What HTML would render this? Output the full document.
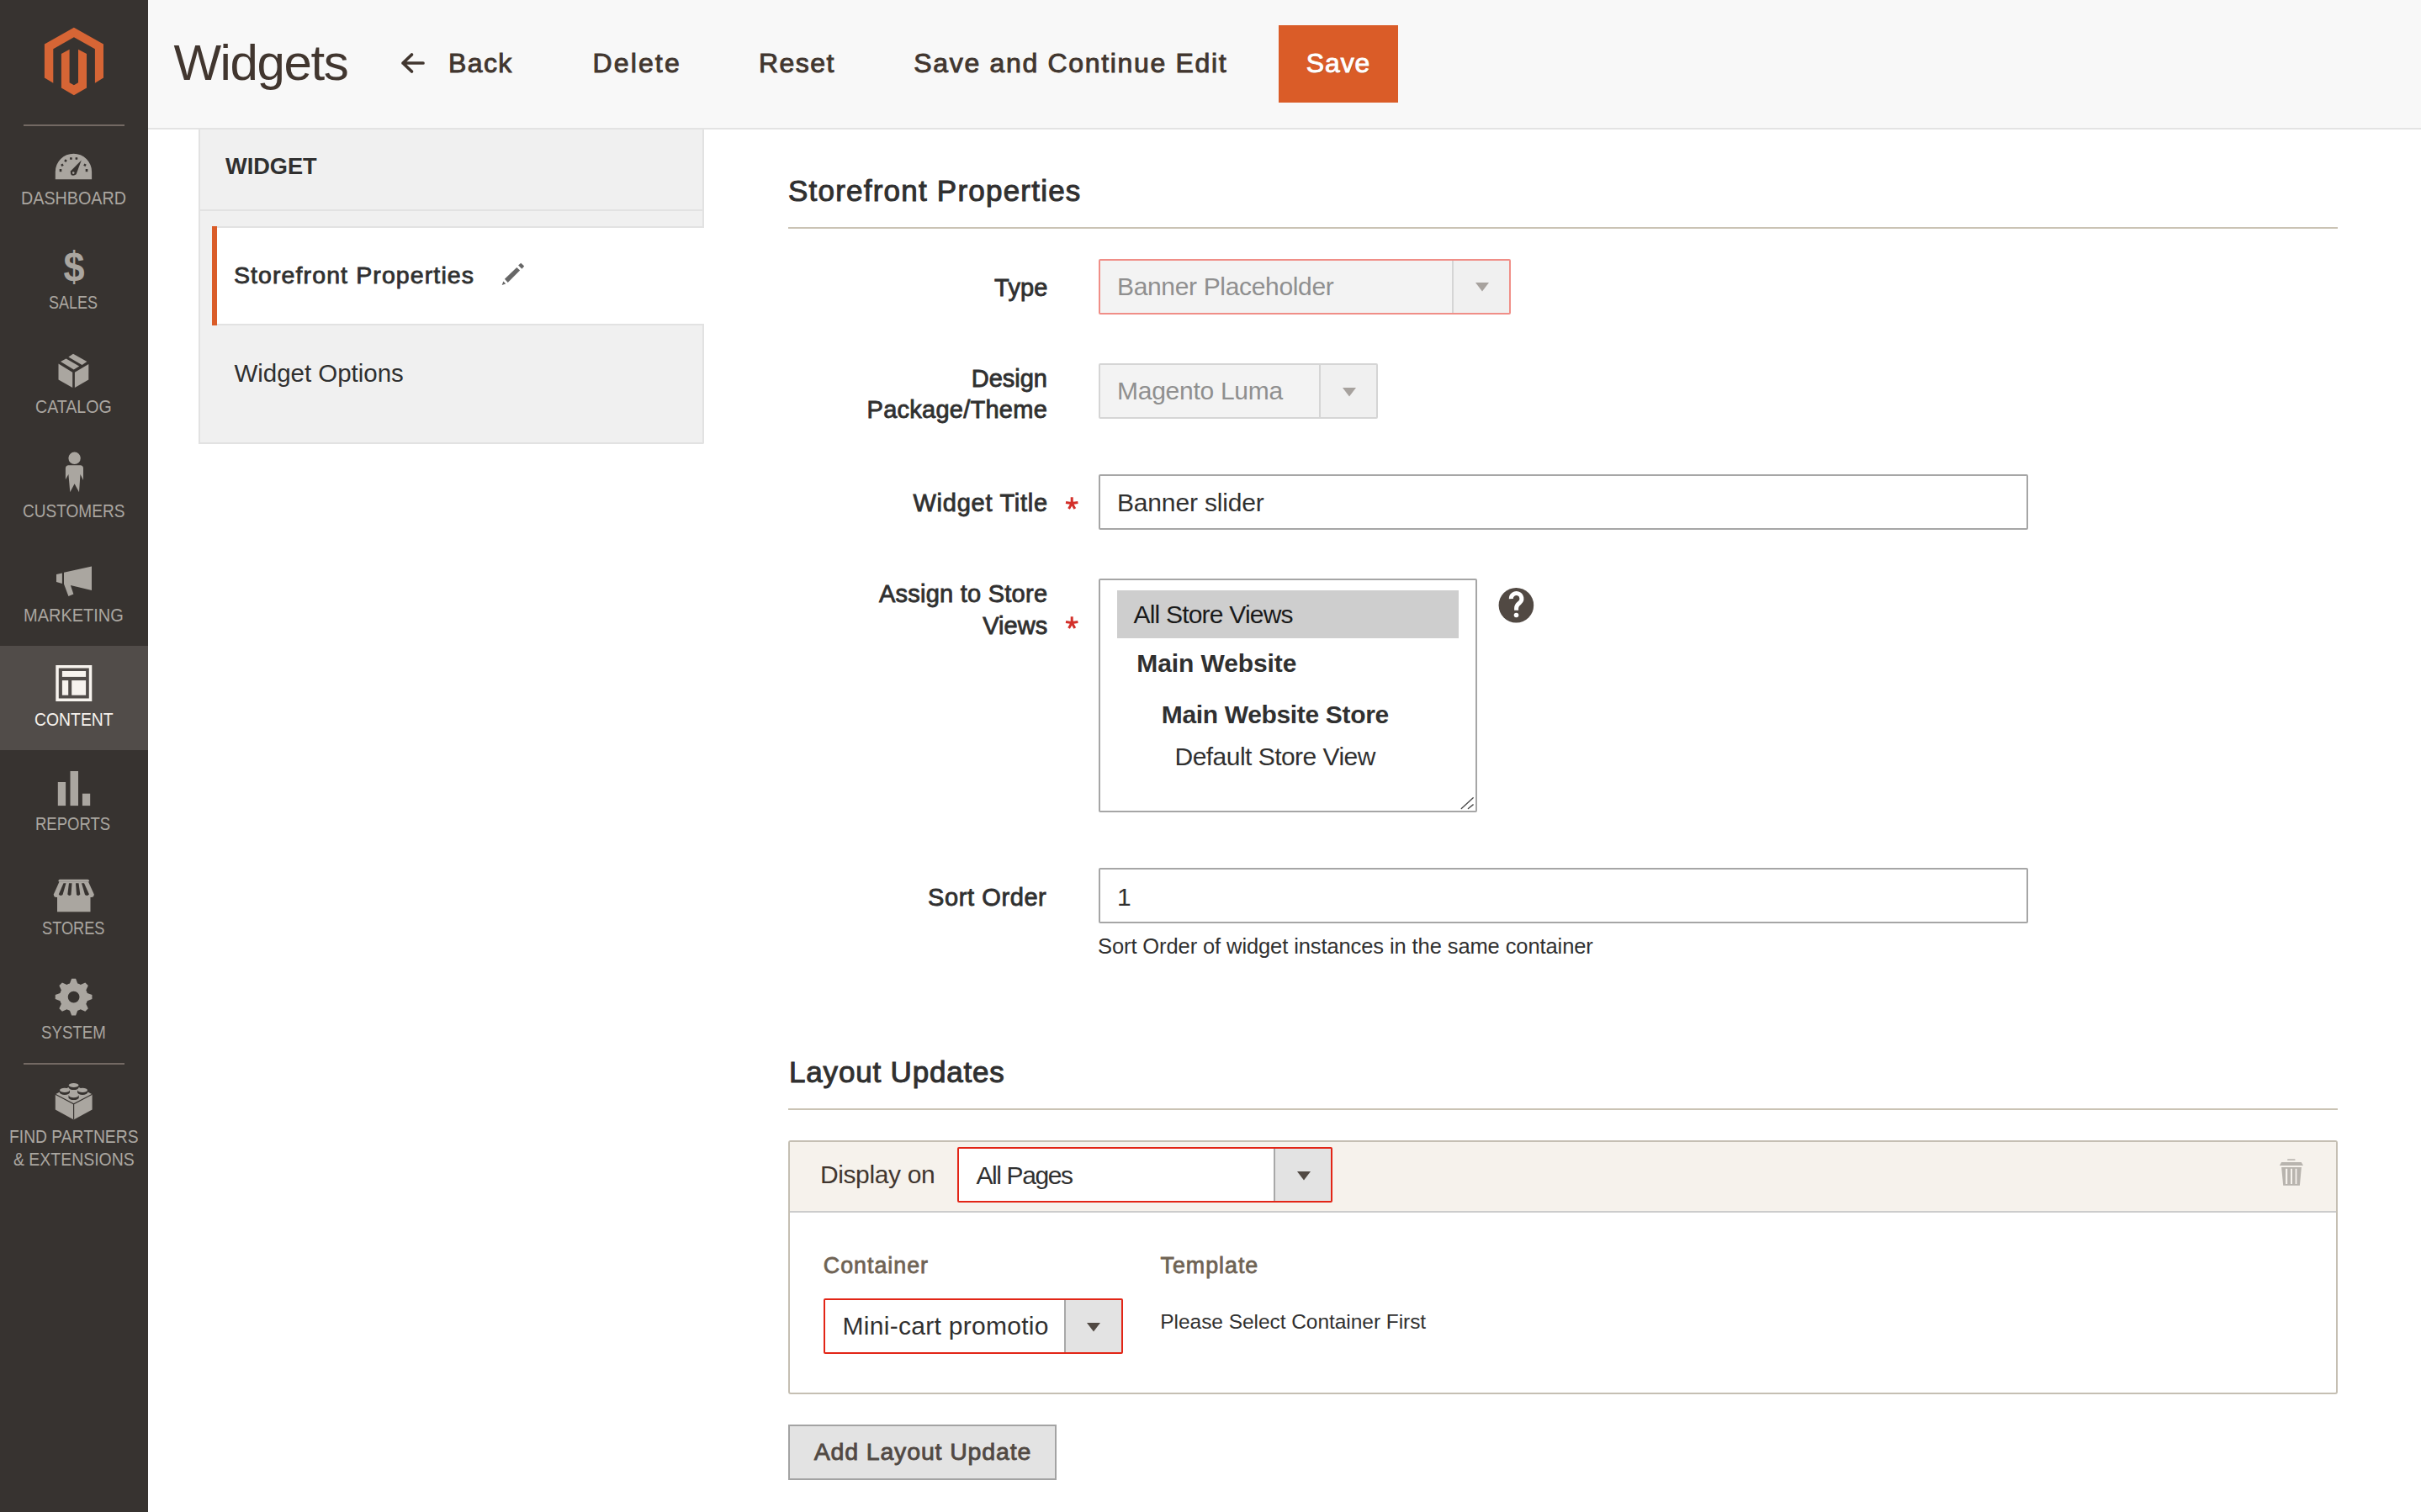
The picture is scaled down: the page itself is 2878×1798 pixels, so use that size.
<!DOCTYPE html>
<html><head><meta charset="utf-8"><title>Widgets</title>
<style>
html,body{margin:0;padding:0;}
body{width:2878px;height:1798px;overflow:hidden;position:relative;background:#fff;font-family:"Liberation Sans", sans-serif;}
.t{position:absolute;line-height:1;white-space:nowrap;}
svg{position:absolute;overflow:visible;}
</style></head><body>

<div style="position:absolute;left:0px;top:0px;width:176px;height:1798px;background:#373330"></div>
<svg style="left:0px;top:0px" width="176" height="130" viewBox="0 0 176 130"><path fill="#d66535" d="M87.9,32.7 L123,52.6 L123,92.6 L112.9,98.7 L112.9,58.3 L87.9,44.3 L63.3,58.3 L63.3,98.7 L52.9,92.6 L52.9,52.6 Z"/><path fill="#d66535" d="M72.9,64.1 L82.6,58.7 L82.6,98.3 L87.9,101.2 L93,98.3 L93,58.7 L103,64.1 L103,104.5 L87.9,113.2 L72.9,104.5 Z"/></svg>
<div style="position:absolute;left:28px;top:148px;width:120px;height:2px;background:#736963"></div>
<div style="position:absolute;left:28px;top:1264px;width:120px;height:2px;background:#736963"></div>
<div style="position:absolute;left:0px;top:768px;width:176px;height:124px;background:#514c49"></div>
<svg style="left:0px;top:170px" width="176" height="50" viewBox="0 170 176 50"><path fill="#aaa6a0" d="M65.8,213.3 L65.8,204.3 A21.65,21.65 0 0 1 109.1,204.3 L109.1,213.3 Z"/><g fill="#373330"><rect x="70.7" y="201" width="2.6" height="3.2"/><rect x="72.6" y="195" width="2.6" height="2.6" transform="rotate(-30 73.9 196.2)"/><rect x="76.7" y="189.8" width="2.6" height="2.6" transform="rotate(-55 78 191.1)"/><rect x="83" y="187.3" width="2.6" height="2.6" transform="rotate(-80 84.3 188.5)"/><rect x="89.5" y="187.3" width="2.6" height="2.6" transform="rotate(-100 90.8 188.5)"/><rect x="99.7" y="195" width="2.6" height="2.6" transform="rotate(30 101 196.2)"/><rect x="101.7" y="201" width="2.6" height="3.2"/><path d="M96.8,190.5 L90.6,207.3 Q88,209.5 84.8,208.3 Q83.4,205.5 83.9,203.5 Z"/></g><circle cx="87.2" cy="205.6" r="1.3" fill="#aaa6a0"/></svg>
<div class="t" style="left:0;width:176px;text-align:center;top:292px;font-size:50px;font-weight:700;color:#aaa6a0;transform:scaleX(0.9);transform-origin:87.4px 0">$</div>
<svg style="left:0px;top:410px" width="176" height="60" viewBox="0 410 176 60"><g fill="#aaa6a0"><path d="M69.5,432.6 L86.2,442.7 L86.2,461 L69.5,451.5 Z"/><path d="M88.9,442.7 L105.3,433 L105.3,451.5 L88.9,461 Z"/><path d="M72,430.1 L78.6,426.4 L94.2,435.5 L87.7,439.5 Z"/><path d="M81.4,424.5 L87,420.7 L103.4,430.1 L97.5,433.9 Z"/></g></svg>
<svg style="left:0px;top:530px" width="176" height="60" viewBox="0 530 176 60"><g fill="#aaa6a0"><circle cx="88.6" cy="544.8" r="7.2"/><path d="M81,553.3 L96,553.3 Q99,553.8 99,557 L99,570.9 L95.5,564 L94,585.3 L88.6,575.3 L83.3,585.3 L81.4,564 L77.9,570.2 L77.9,557 Q78,553.8 81,553.3 Z"/></g></svg>
<svg style="left:0px;top:665px" width="176" height="50" viewBox="0 665 176 50"><g fill="#aaa6a0"><path d="M67,683 L73.9,681.4 L73.9,694 L67,692 Z"/><path d="M76,680.8 L109,673.6 L109,702 L83.9,695.9 L87.4,706.5 L81.4,709 L76,694.6 Z"/></g></svg>
<svg style="left:0px;top:785px" width="176" height="55" viewBox="0 785 176 55"><g fill="#f7f3ee"><path fill-rule="evenodd" d="M66.3,791 L109.3,791 L109.3,834 L66.3,834 Z M69.8,794.5 L69.8,830.5 L105.8,830.5 L105.8,794.5 Z"/><rect x="73.9" y="798" width="28.2" height="6.9"/><rect x="73.9" y="809.1" width="7.3" height="17.6"/><rect x="85.2" y="809.1" width="16.9" height="17.6"/></g></svg>
<svg style="left:0px;top:910px" width="176" height="55" viewBox="0 910 176 55"><g fill="#aaa6a0"><rect x="68.8" y="930" width="9.3" height="28.1"/><rect x="83.5" y="917" width="9.5" height="41.1"/><rect x="97.9" y="943.7" width="9.3" height="14.4"/></g></svg>
<svg style="left:0px;top:1040px" width="176" height="50" viewBox="0 1040 176 50"><g fill="#aaa6a0"><rect x="69.5" y="1045.8" width="36.4" height="3" rx="1.5"/><path d="M70.5,1048.5 L105,1048.5 L111.8,1063.5 Q111.8,1067 108.5,1067 L67,1067 Q63.8,1067 63.8,1063.5 Z"/><rect x="68" y="1066" width="39.5" height="18.3"/></g><g fill="#373330"><path d="M75.5,1050.3 L78.5,1050.3 L74.5,1064 Q71.5,1066 69.8,1063.5 Z"/><path d="M82,1050.3 L85.5,1050.3 L84.5,1064 Q82,1066 80.3,1063.5 Z"/><path d="M90,1050.3 L93.5,1050.3 L95.3,1063.5 Q93.5,1066 91,1064 Z"/><path d="M97,1050.3 L100,1050.3 L106,1063.5 Q104,1066 101,1064 Z"/></g></svg>
<svg style="left:0px;top:1155px" width="176" height="60" viewBox="0 1155 176 60"><path fill="#aaa6a0" fill-rule="evenodd" d="M82.97,1169.45 L85.11,1163.74 L90.09,1163.74 L92.23,1169.45 L93.07,1169.72 L94.03,1170.08 L94.96,1170.50 L95.74,1170.91 L101.30,1168.38 L104.82,1171.90 L102.29,1177.46 L102.70,1178.24 L103.12,1179.17 L103.48,1180.13 L103.75,1180.97 L109.46,1183.11 L109.46,1188.09 L103.75,1190.23 L103.48,1191.07 L103.12,1192.03 L102.70,1192.96 L102.29,1193.74 L104.82,1199.30 L101.30,1202.82 L95.74,1200.29 L94.96,1200.70 L94.03,1201.12 L93.07,1201.48 L92.23,1201.75 L90.09,1207.46 L85.11,1207.46 L82.97,1201.75 L82.13,1201.48 L81.17,1201.12 L80.24,1200.70 L79.46,1200.29 L73.90,1202.82 L70.38,1199.30 L72.91,1193.74 L72.50,1192.96 L72.08,1192.03 L71.72,1191.07 L71.45,1190.23 L65.74,1188.09 L65.74,1183.11 L71.45,1180.97 L71.72,1180.13 L72.08,1179.17 L72.50,1178.24 L72.91,1177.46 L70.38,1171.90 L73.90,1168.38 L79.46,1170.91 L80.24,1170.50 L81.17,1170.08 L82.13,1169.72 Z M94.5,1185.6 A6.9,6.9 0 1 0 80.69999999999999,1185.6 A6.9,6.9 0 1 0 94.5,1185.6 Z"/></svg>
<svg style="left:0px;top:1280px" width="176" height="60" viewBox="0 1280 176 60"><path fill="#aaa6a0" d="M65.8,1301.2 L87.6,1289.8 L109.6,1301.2 L109.6,1319.4 L87.6,1331.5 L65.8,1319.4 Z"/><path fill="none" stroke="#373330" stroke-width="1.2" d="M65.8,1301.2 L87.6,1312.8 L109.6,1301.2 M87.6,1312.8 L87.6,1331.5"/><path fill="#373330" d="M81.5,1290.5 L93.7,1290.5 L93.7,1293.1 A6.1,2.9 0 0 1 81.5,1293.1 Z"/><ellipse cx="87.6" cy="1290.5" rx="5.8" ry="2.6" fill="#aaa6a0"/><path fill="#373330" d="M70.8,1296.4 L83.0,1296.4 L83.0,1299.0 A6.1,2.9 0 0 1 70.8,1299.0 Z"/><ellipse cx="76.9" cy="1296.4" rx="5.8" ry="2.6" fill="#aaa6a0"/><path fill="#373330" d="M92.0,1296.4 L104.2,1296.4 L104.2,1299.0 A6.1,2.9 0 0 1 92.0,1299.0 Z"/><ellipse cx="98.1" cy="1296.4" rx="5.8" ry="2.6" fill="#aaa6a0"/><path fill="#373330" d="M81.5,1302.6 L93.7,1302.6 L93.7,1305.2 A6.1,2.9 0 0 1 81.5,1305.2 Z"/><ellipse cx="87.6" cy="1302.6" rx="5.8" ry="2.6" fill="#aaa6a0"/></svg>
<div style="position:absolute;left:176px;top:0px;width:2702px;height:152px;background:#f8f8f8"></div>
<div style="position:absolute;left:176px;top:152px;width:2702px;height:2px;background:#e3e3e3"></div>
<svg style="left:470px;top:55px" width="45" height="40" viewBox="470 55 45 40"><path d="M503,75 L479,75 M489.5,65 L479,75 L489.5,85" fill="none" stroke="#41362f" stroke-width="3.7" stroke-linecap="round" stroke-linejoin="round"/></svg>
<div style="position:absolute;left:1520px;top:30px;width:142px;height:92px;background:#da5c28"></div>
<div style="position:absolute;left:236px;top:154px;width:601px;height:374px;background:#f0f0f0;box-sizing:border-box;border:2px solid #e2e2e2;border-top:none;border-bottom-right-radius:2px"></div>
<div style="position:absolute;left:238px;top:249px;width:597px;height:2px;background:#e2e2e2"></div>
<div style="position:absolute;left:258px;top:269px;width:579px;height:2px;background:#e2e2e2"></div>
<div style="position:absolute;left:258px;top:271px;width:600px;height:114px;background:#fff"></div>
<div style="position:absolute;left:252px;top:269px;width:6px;height:118px;background:#da5c28"></div>
<div style="position:absolute;left:258px;top:385px;width:579px;height:2px;background:#e2e2e2"></div>
<svg style="left:590px;top:308px" width="40" height="36" viewBox="590 308 40 36"><g fill="#676767"><path d="M596.7,338.9 L598.4,334.6 L601.2,337.5 Z"/><path d="M599.9,331.7 L614.3,317.9 L618.1,321.5 L603.7,335.9 Z"/><path d="M616.1,315.4 L619.2,312.7 L623.2,316.5 L620.4,319.8 Z"/></g></svg>
<div style="position:absolute;left:937px;top:270px;width:1842px;height:2px;background:#cac3b4"></div>
<svg style="left:1266px;top:591px" width="16" height="16" viewBox="0 0 16 16"><g stroke="#d3302a" stroke-width="3"><path d="M8.2,0.3 L8.2,7.6 M1,6.4 L8.2,7.6 M15.4,6.4 L8.2,7.6 M4.6,14 L8.2,7.6 M11.8,14 L8.2,7.6"/></g></svg>
<svg style="left:1266px;top:733.3px" width="16" height="16" viewBox="0 0 16 16"><g stroke="#d3302a" stroke-width="3"><path d="M8.2,0.3 L8.2,7.6 M1,6.4 L8.2,7.6 M15.4,6.4 L8.2,7.6 M4.6,14 L8.2,7.6 M11.8,14 L8.2,7.6"/></g></svg>
<div style="position:absolute;left:1306px;top:308px;width:490px;height:66px;box-sizing:border-box;background:#f3f3f3;border:2px solid #f08e87;border-radius:2px"></div>
<div style="position:absolute;left:1726px;top:310px;width:2px;height:62px;background:#d5d5d5"></div>
<div style="position:absolute;left:1728px;top:310px;width:66px;height:62px;background:#f0f0f0"></div>
<svg style="left:1754px;top:336px" width="16" height="11" viewBox="0 0 16 11"><path d="M0,0 L16,0 L8,10.5 Z" fill="#a7a29e"/></svg>
<div style="position:absolute;left:1306px;top:432px;width:332px;height:66px;box-sizing:border-box;background:#f3f3f3;border:2px solid #d5d5d5;border-radius:2px"></div>
<div style="position:absolute;left:1568px;top:434px;width:2px;height:62px;background:#d5d5d5"></div>
<div style="position:absolute;left:1570px;top:434px;width:66px;height:62px;background:#f0f0f0"></div>
<svg style="left:1596px;top:461px" width="16" height="11" viewBox="0 0 16 11"><path d="M0,0 L16,0 L8,10.5 Z" fill="#a7a29e"/></svg>
<div style="position:absolute;left:1306px;top:564px;width:1105px;height:66px;box-sizing:border-box;background:#fff;border:2px solid #a6a6a6;border-radius:2px"></div>
<div style="position:absolute;left:1306px;top:688px;width:450px;height:278px;box-sizing:border-box;background:#fff;border:2px solid #a6a6a6;border-radius:2px"></div>
<div style="position:absolute;left:1328px;top:702px;width:406px;height:57px;background:#cecece"></div>
<svg style="left:1730px;top:940px" width="30" height="30" viewBox="1730 940 30 30"><path d="M1737.3,961.5 L1751.2,948.8 M1745.4,961.5 L1751.2,956.9" stroke="#4a4a4a" stroke-width="1.4" stroke-linecap="round"/></svg>
<svg style="left:1775px;top:693px" width="56" height="56" viewBox="1775 693 56 56"><circle cx="1802.4" cy="719.8" r="20.8" fill="#514943"/><path d="M1796.3,712.2 A6.3,6.3 0 1 1 1806.8,716.5 Q1802.6,719.8 1802.6,723 L1802.6,725.7" fill="none" stroke="#fff" stroke-width="5"/><circle cx="1802.5" cy="731.5" r="2.8" fill="#fff"/></svg>
<div style="position:absolute;left:1306px;top:1032px;width:1105px;height:66px;box-sizing:border-box;background:#fff;border:2px solid #a6a6a6;border-radius:2px"></div>
<div style="position:absolute;left:937px;top:1318px;width:1842px;height:2px;background:#cac3b4"></div>
<div style="position:absolute;left:937px;top:1356px;width:1842px;height:302px;box-sizing:border-box;background:#fff;border:2px solid #c5bfb3;border-radius:3px"></div>
<div style="position:absolute;left:939px;top:1358px;width:1838px;height:82px;background:#f6f2ec"></div>
<div style="position:absolute;left:939px;top:1440px;width:1838px;height:2px;background:#cccccc"></div>
<div style="position:absolute;left:1138px;top:1364px;width:446px;height:66px;box-sizing:border-box;background:#fff;border:2px solid #e22516;border-radius:2px"></div>
<div style="position:absolute;left:1514px;top:1366px;width:2px;height:62px;background:#a8a8a8"></div>
<div style="position:absolute;left:1516px;top:1366px;width:66px;height:62px;background:#e3e3e3"></div>
<svg style="left:1542px;top:1393px" width="16" height="11" viewBox="0 0 16 11"><path d="M0,0 L16,0 L8,10.5 Z" fill="#514943"/></svg>
<svg style="left:2705px;top:1375px" width="40" height="40" viewBox="2705 1375 40 40"><g fill="#b8b4ae"><rect x="2719.2" y="1378.3" width="9.2" height="1.6"/><path d="M2712.1,1382.1 L2735.7,1382.1 L2738,1386 L2709.9,1386 Z"/><path fill-rule="evenodd" d="M2712.1,1387.9 L2735.9,1387.9 L2733.9,1409.8 L2714.2,1409.8 Z M2717,1389.7 L2717,1407.9 L2719.2,1407.9 L2719.2,1389.7 Z M2723,1389.7 L2723,1407.9 L2725,1407.9 L2725,1389.7 Z M2728.6,1389.7 L2728.6,1407.9 L2730.4,1407.9 L2730.4,1389.7 Z"/></g></svg>
<div style="position:absolute;left:979px;top:1544px;width:356px;height:66px;box-sizing:border-box;background:#fff;border:2px solid #e22516;border-radius:2px"></div>
<div style="position:absolute;left:1265px;top:1546px;width:2px;height:62px;background:#a8a8a8"></div>
<div style="position:absolute;left:1267px;top:1546px;width:66px;height:62px;background:#e3e3e3"></div>
<svg style="left:1292px;top:1573px" width="16" height="11" viewBox="0 0 16 11"><path d="M0,0 L16,0 L8,10.5 Z" fill="#514943"/></svg>
<div style="position:absolute;left:937px;top:1694px;width:319px;height:66px;box-sizing:border-box;background:#e3e3e3;border:2px solid #a3a3a3"></div>
<div class="t" style="left:24.96px;top:226px;font-size:21.5px;font-weight:400;color:#aaa6a0;transform:scaleX(0.9180);transform-origin:0 0;">DASHBOARD</div>
<div class="t" style="left:58.46px;top:350px;font-size:21.5px;font-weight:400;color:#aaa6a0;transform:scaleX(0.8368);transform-origin:0 0;">SALES</div>
<div class="t" style="left:42.09px;top:474px;font-size:21.5px;font-weight:400;color:#aaa6a0;transform:scaleX(0.9113);transform-origin:0 0;">CATALOG</div>
<div class="t" style="left:27.11px;top:598px;font-size:21.5px;font-weight:400;color:#aaa6a0;transform:scaleX(0.8859);transform-origin:0 0;">CUSTOMERS</div>
<div class="t" style="left:28.44px;top:722px;font-size:21.5px;font-weight:400;color:#aaa6a0;transform:scaleX(0.9298);transform-origin:0 0;">MARKETING</div>
<div class="t" style="left:40.80px;top:846px;font-size:21.5px;font-weight:400;color:#f7f3ee;transform:scaleX(0.9010);transform-origin:0 0;">CONTENT</div>
<div class="t" style="left:42.28px;top:970px;font-size:21.5px;font-weight:400;color:#aaa6a0;transform:scaleX(0.8614);transform-origin:0 0;">REPORTS</div>
<div class="t" style="left:50.45px;top:1094px;font-size:21.5px;font-weight:400;color:#aaa6a0;transform:scaleX(0.8465);transform-origin:0 0;">STORES</div>
<div class="t" style="left:49.13px;top:1218px;font-size:21.5px;font-weight:400;color:#aaa6a0;transform:scaleX(0.8674);transform-origin:0 0;">SYSTEM</div>
<div class="t" style="left:10.71px;top:1342px;font-size:21.5px;font-weight:400;color:#aaa6a0;transform:scaleX(0.8964);transform-origin:0 0;">FIND PARTNERS</div>
<div class="t" style="left:16.10px;top:1369px;font-size:21.5px;font-weight:400;color:#aaa6a0;transform:scaleX(0.9045);transform-origin:0 0;">&amp; EXTENSIONS</div>
<div class="t" style="left:206.40px;top:45px;font-size:60px;font-weight:400;color:#41362f;letter-spacing:-1.40px;">Widgets</div>
<div class="t" style="left:533.10px;top:59px;font-size:32px;font-weight:400;color:#41362f;letter-spacing:1.33px;-webkit-text-stroke:0.93px #41362f;">Back</div>
<div class="t" style="left:704.50px;top:59px;font-size:32px;font-weight:400;color:#41362f;letter-spacing:2.14px;-webkit-text-stroke:0.93px #41362f;">Delete</div>
<div class="t" style="left:902.00px;top:59px;font-size:32px;font-weight:400;color:#41362f;letter-spacing:1.45px;-webkit-text-stroke:0.93px #41362f;">Reset</div>
<div class="t" style="left:1086.30px;top:59px;font-size:32px;font-weight:400;color:#41362f;letter-spacing:1.67px;-webkit-text-stroke:0.93px #41362f;">Save and Continue Edit</div>
<div class="t" style="left:1552.70px;top:59px;font-size:32px;font-weight:400;color:#fff;letter-spacing:0.90px;-webkit-text-stroke:0.93px #fff;text-shadow:1px 1px 0 rgba(0,0,0,0.25);">Save</div>
<div class="t" style="left:268.10px;top:183px;font-size:28.5px;font-weight:700;color:#303030;transform:scaleX(0.9535);transform-origin:0 0;">WIDGET</div>
<div class="t" style="left:277.90px;top:313px;font-size:28.5px;font-weight:400;color:#303030;letter-spacing:1.11px;-webkit-text-stroke:0.83px #303030;">Storefront Properties</div>
<div class="t" style="left:278.40px;top:429px;font-size:29.5px;font-weight:400;color:#303030;letter-spacing:-0.02px;">Widget Options</div>
<div class="t" style="left:937.00px;top:209px;font-size:35px;font-weight:400;color:#303030;letter-spacing:1.22px;-webkit-text-stroke:1.02px #303030;">Storefront Properties</div>
<div class="t" style="left:1182.10px;top:328px;font-size:29px;font-weight:400;color:#303030;letter-spacing:0.17px;-webkit-text-stroke:0.84px #303030;">Type</div>
<div class="t" style="left:1154.70px;top:436px;font-size:29px;font-weight:400;color:#303030;-webkit-text-stroke:0.84px #303030;">Design</div>
<div class="t" style="left:1030.60px;top:473px;font-size:29px;font-weight:400;color:#303030;letter-spacing:0.25px;-webkit-text-stroke:0.84px #303030;">Package/Theme</div>
<div class="t" style="left:1085.50px;top:584px;font-size:29px;font-weight:400;color:#303030;letter-spacing:0.74px;-webkit-text-stroke:0.84px #303030;">Widget Title</div>
<div class="t" style="left:1045.00px;top:692px;font-size:29px;font-weight:400;color:#303030;letter-spacing:0.24px;-webkit-text-stroke:0.84px #303030;">Assign to Store</div>
<div class="t" style="left:1168.30px;top:730px;font-size:29px;font-weight:400;color:#303030;-webkit-text-stroke:0.84px #303030;">Views</div>
<div class="t" style="left:1103.00px;top:1053px;font-size:29px;font-weight:400;color:#303030;letter-spacing:0.60px;-webkit-text-stroke:0.84px #303030;">Sort Order</div>
<div class="t" style="left:1328.00px;top:326px;font-size:30px;font-weight:400;color:#8f8f8f;letter-spacing:-0.34px;">Banner Placeholder</div>
<div class="t" style="left:1328.00px;top:450px;font-size:30px;font-weight:400;color:#8f8f8f;letter-spacing:-0.27px;">Magento Luma</div>
<div class="t" style="left:1328.00px;top:583px;font-size:30px;font-weight:400;color:#303030;letter-spacing:-0.17px;">Banner slider</div>
<div class="t" style="left:1347.50px;top:716px;font-size:30px;font-weight:400;color:#1a1a1a;letter-spacing:-0.80px;">All Store Views</div>
<div class="t" style="left:1351.30px;top:774px;font-size:30px;font-weight:700;color:#303030;letter-spacing:-0.10px;">Main Website</div>
<div class="t" style="left:1380.80px;top:835px;font-size:30px;font-weight:700;color:#303030;letter-spacing:-0.34px;">Main Website Store</div>
<div class="t" style="left:1396.50px;top:885px;font-size:30px;font-weight:400;color:#303030;letter-spacing:-0.53px;">Default Store View</div>
<div class="t" style="left:1328.00px;top:1052px;font-size:30px;font-weight:400;color:#303030;">1</div>
<div class="t" style="left:1305.00px;top:1113px;font-size:25.5px;font-weight:400;color:#303030;letter-spacing:-0.10px;">Sort Order of widget instances in the same container</div>
<div class="t" style="left:938.00px;top:1257px;font-size:35px;font-weight:400;color:#303030;letter-spacing:0.82px;-webkit-text-stroke:1.02px #303030;">Layout Updates</div>
<div class="t" style="left:974.90px;top:1382px;font-size:30px;font-weight:400;color:#41362f;letter-spacing:-0.37px;">Display on</div>
<div class="t" style="left:1160.50px;top:1383px;font-size:30px;font-weight:400;color:#303030;letter-spacing:-1.40px;">All Pages</div>
<div class="t" style="left:978.80px;top:1492px;font-size:26.8px;font-weight:400;color:#6f6354;letter-spacing:1.00px;-webkit-text-stroke:0.78px #6f6354;">Container</div>
<div class="t" style="left:1379.60px;top:1492px;font-size:26.8px;font-weight:400;color:#6f6354;letter-spacing:0.99px;-webkit-text-stroke:0.78px #6f6354;">Template</div>
<div class="t" style="left:1001.50px;top:1562px;font-size:30px;font-weight:400;color:#303030;letter-spacing:0.29px;">Mini-cart promotio</div>
<div class="t" style="left:1379.30px;top:1560px;font-size:24.5px;font-weight:400;color:#303030;letter-spacing:-0.05px;">Please Select Container First</div>
<div class="t" style="left:967.70px;top:1712px;font-size:28.5px;font-weight:400;color:#514943;letter-spacing:0.85px;-webkit-text-stroke:0.83px #514943;">Add Layout Update</div>
</body></html>
